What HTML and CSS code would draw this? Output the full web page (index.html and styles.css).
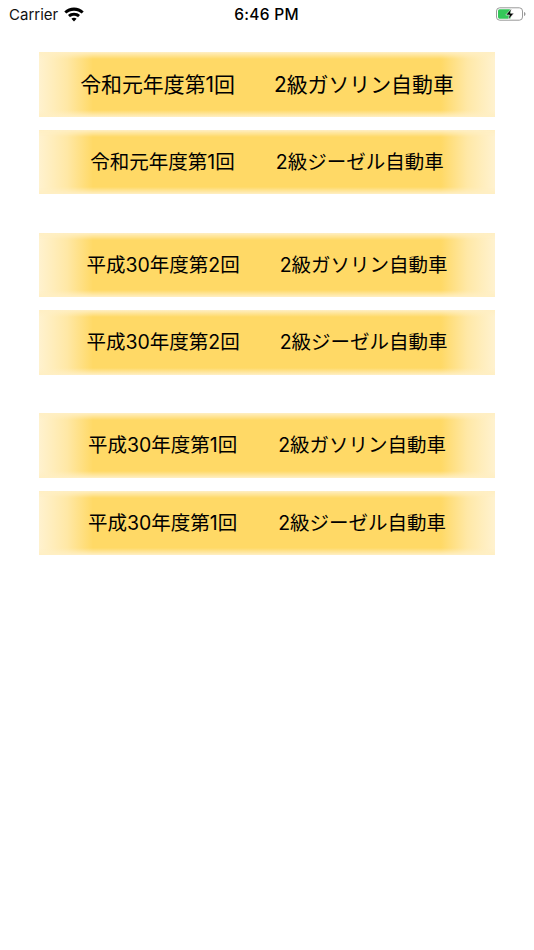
FILE: index.html
```html
<!DOCTYPE html>
<html lang="ja">
<head>
    <meta charset="UTF-8">
    <meta name="viewport" content="width=device-width, initial-scale=1.0">
    <title>試験一覧</title>
    <link rel="stylesheet" href="styles.css">
</head>
<body>
    <div class="status-bar">
        <div class="status-left">
            <span class="carrier">Carrier</span>
            <svg class="wifi" width="20" height="15" viewBox="0 0 20 15">
                <path d="M10 .6c3.700 0 7.100 1.400 9.700 3.800l-2 2.200C15.700 4.700 13 3.700 10 3.700S4.300 4.700 2.300 6.600l-2-2.200C2.900 2 6.300.6 10 .6z" fill="#000"/>
                <path d="M10 5.700c2.300 0 4.400.9 6 2.300l-2 2.200c-1.100-1-2.500-1.500-4-1.500s-2.900.5-4 1.500L4 8c1.600-1.400 3.700-2.300 6-2.300z" fill="#000"/>
                <path d="M10 10.700c1 0 1.900.4 2.600 1L10 14.600l-2.600-2.900c.7-.6 1.600-1 2.600-1z" fill="#000"/>
            </svg>
        </div>
        <div class="status-time">6:46 PM</div>
        <div class="status-right">
            <svg width="31" height="14" viewBox="0 0 31 14">
                <rect x="0.500" y="0.800" width="26" height="12.400" rx="3.200" fill="none" stroke="#999" stroke-width="1"/>
                <rect x="2" y="2.300" width="13" height="9.400" rx="1.600" fill="#34c759"/>
                <path d="M28 5v4c.9-.3 1.500-1.100 1.500-2s-.6-1.700-1.500-2z" fill="#999"/>
                <path d="M15.500 1.500 9.800 8h3.600l-1.200 4.800L18 6.200h-3.700z" fill="#000" stroke="#fff" stroke-width="0.600"/>
            </svg>
        </div>
    </div>

    <div class="exam-list">
        <div class="exam-group">
            <div class="exam-button size-large"><span>令和元年度第1回</span><span>2級ガソリン自動車</span></div>
            <div class="exam-button gap-wide"><span>令和元年度第1回</span><span>2級ジーゼル自動車</span></div>
        </div>
        <div class="exam-group">
            <div class="exam-button"><span>平成30年度第2回</span><span>2級ガソリン自動車</span></div>
            <div class="exam-button"><span>平成30年度第2回</span><span>2級ジーゼル自動車</span></div>
        </div>
        <div class="exam-group">
            <div class="exam-button gap-wide"><span>平成30年度第1回</span><span>2級ガソリン自動車</span></div>
            <div class="exam-button gap-wide"><span>平成30年度第1回</span><span>2級ジーゼル自動車</span></div>
        </div>
    </div>
</body>
</html>
```
FILE: styles.css
```css
body {
    margin: 0;
    background-color: #fff;
    color: #000;
    font-family: Inter, "Noto Sans CJK JP", sans-serif;
}
.status-bar {
    display: grid;
    grid-template-columns: 1fr auto 1fr;
    align-items: center;
    height: 28px;
    padding: 0 7px 0 9px;
    font-size: 15px;
}
.status-left {
    display: flex;
    align-items: center;
    gap: 6px;
}
.carrier {
    color: #111;
}
.status-time {
    font-weight: 500;
    font-size: 15.5px;
    letter-spacing: 0.3px;
    padding-right: 3px;
}
.status-right {
    display: flex;
    justify-content: flex-end;
}
.exam-list {
    display: flex;
    flex-direction: column;
    gap: 38.5px;
    padding: 24px 39px 0;
}
.exam-group {
    display: flex;
    flex-direction: column;
    gap: 13px;
}
.exam-button {
    display: flex;
    justify-content: center;
    align-items: center;
    gap: 40px;
    height: 64.5px;
    padding-bottom: 3px;
    box-sizing: border-box;
    font-size: 19.5px;
    background-image:
        linear-gradient(180deg, #ffefc4, rgba(255, 239, 196, 0) 7px, rgba(255, 239, 196, 0) calc(100% - 7px), #ffefc4),
        linear-gradient(90deg, #fff2cf, #ffe8a6 28px, #ffd966 54px, #ffd966 calc(100% - 54px), #ffe8a6 calc(100% - 28px), #fff2cf);
}
.size-large {
    font-size: 20.9px;
    gap: 39px;
}
.gap-wide {
    gap: 41px;
}
```
